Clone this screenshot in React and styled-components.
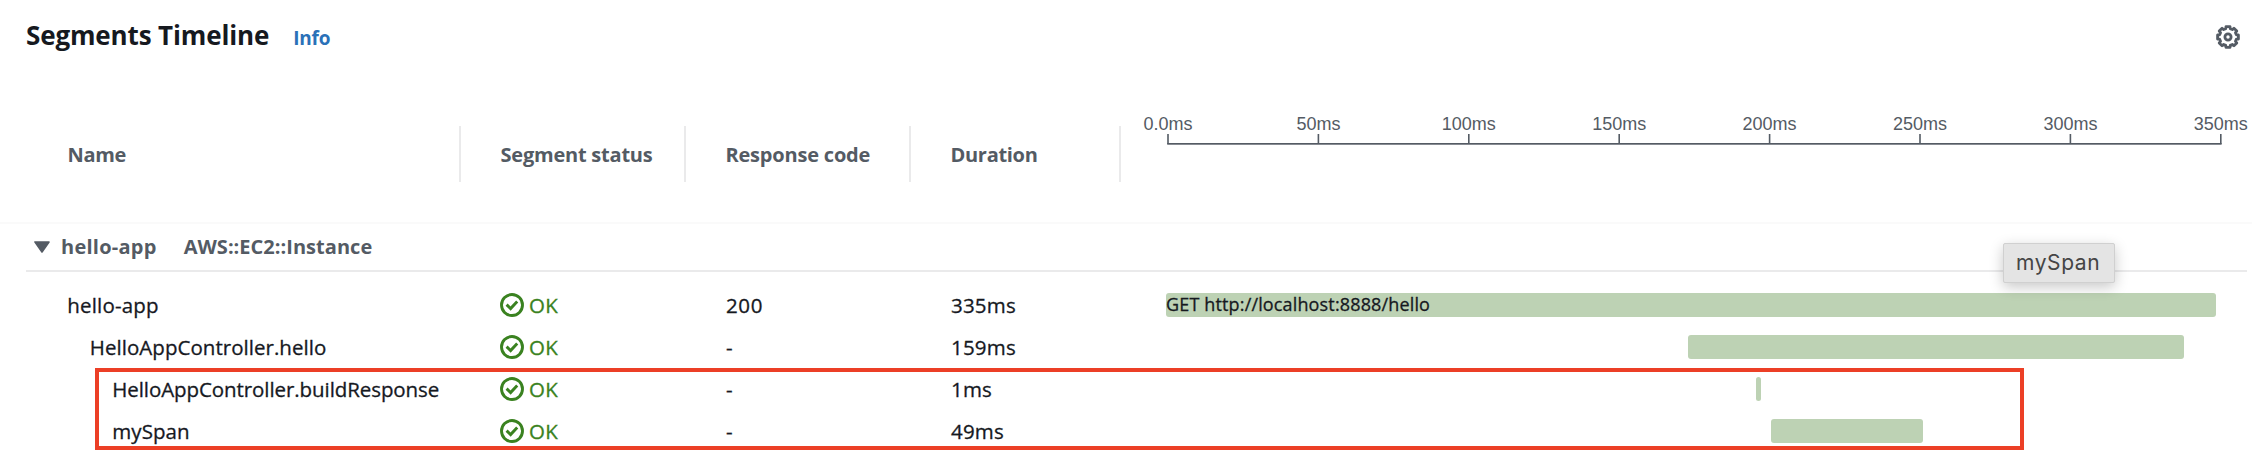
import React from 'react';
import styled, { createGlobalStyle } from 'styled-components';

const GlobalStyle = createGlobalStyle`
  *, *::before, *::after { box-sizing: border-box; }
  body {
    margin: 0;
    background: #ffffff;
    color: #16191f;
    font-family: "Open Sans", "Noto Sans", sans-serif;
    font-size: 20.5px;
    line-height: 28px;
  }
`;

const COLUMNS = '461px 225px 225px 210px 1fr';

const Panel = styled.main`
  position: relative;
  display: flex;
  flex-direction: column;
  width: 2252px;
  height: 476px;
  overflow: hidden;
  background: #ffffff;
`;

const TitleBar = styled.header`
  display: flex;
  align-items: center;
  justify-content: space-between;
  height: 74px;
  padding: 0 12px 0 26px;
`;

const TitleGroup = styled.div`
  display: flex;
  align-items: baseline;
  gap: 24px;
  padding-bottom: 5px;
`;

const Title = styled.h2`
  margin: 0;
  font-size: 26px;
  line-height: 36px;
  font-weight: 700;
  letter-spacing: -0.14px;
`;

const InfoLink = styled.a`
  color: #2a71b8;
  font-size: 19px;
  font-weight: 700;
  letter-spacing: -0.2px;
`;

const SettingsButton = styled.button`
  display: flex;
  padding: 0;
  border: 0;
  background: none;
`;

const TableHead = styled.div`
  display: grid;
  grid-template-columns: ${COLUMNS};
  height: 150px;
  border-bottom: 2px solid #fafafa;
`;

const HeadCell = styled.div`
  display: flex;
  align-items: center;
  height: 56px;
  margin-top: 52px;
  padding-top: 2px;
  padding-left: ${(p) => (p.$first ? 67.5 : 39.5)}px;
  border-right: 2px solid #eaeaeb;
  color: #545b64;
  font-size: 20px;
  font-weight: 700;
  letter-spacing: ${(p) => p.$tracking}px;
`;

const Axis = styled.svg`
  display: block;
  margin-top: 36px;
  color: #545b64;
  font-family: "Liberation Sans", Arial, sans-serif;
  font-size: 18px;
`;

const GroupRow = styled.div`
  display: flex;
  align-items: center;
  height: 48px;
  margin: 0 5px 0 26px;
  padding-left: 8px;
  border-bottom: 2px solid #eaeaeb;
  color: #545b64;
  font-size: 20px;
  font-weight: 700;
`;

const GroupName = styled.span`
  margin-left: 11px;
  letter-spacing: 0.25px;
`;

const GroupType = styled.span`
  margin-left: 27px;
  letter-spacing: 0.03px;
`;

const Rows = styled.div`
  display: flex;
  flex-direction: column;
  padding-top: 12px;
  -webkit-text-stroke: 0.3px currentColor;
`;

const Row = styled.div`
  display: grid;
  grid-template-columns: ${COLUMNS};
  align-items: center;
  height: 42px;
`;

const NameCell = styled.div`
  padding-left: ${(p) => 67.3 + p.$depth * 22.5}px;
  letter-spacing: ${(p) => p.$tracking}px;
`;

const Status = styled.div`
  display: flex;
  align-items: center;
  gap: 5px;
  padding-left: 39px;
  color: #3a8220;
  letter-spacing: 0.4px;
`;

const Cell = styled.div`
  padding-left: 40px;
  letter-spacing: ${(p) => p.$tracking || 0.2}px;
`;

const Track = styled.div`
  padding-left: 45px;
`;

const Bar = styled.div`
  height: 24px;
  margin-left: ${(p) => p.$start}px;
  width: ${(p) => p.$length}px;
  border-radius: 3px;
  background: #bdd2b4;
  font-size: 18px;
  line-height: 23px;
  letter-spacing: 0.15px;
  white-space: nowrap;
`;

const Highlight = styled.div`
  position: absolute;
  left: 95px;
  top: 368px;
  width: 1929px;
  height: 82px;
  border: 4px solid #ec3f26;
`;

const Tooltip = styled.div`
  position: absolute;
  left: 2003px;
  top: 243px;
  width: 112px;
  height: 40px;
  padding-left: 12px;
  border: 1px solid #d0d0d0;
  border-radius: 2px;
  background: #e4e4e4;
  box-shadow: 0 4px 14px rgba(0, 0, 0, 0.22);
  color: #454545;
  font-family: Inter, sans-serif;
  font-size: 21px;
  line-height: 38px;
  letter-spacing: 0.6px;
`;

const TICKS = ['0.0ms', '50ms', '100ms', '150ms', '200ms', '250ms', '300ms', '350ms'];

const SPANS = [
  { name: 'hello-app', depth: 0, tracking: 0.18, code: '200', duration: '335ms', start: 0, length: 1050, label: 'GET http://localhost:8888/hello' },
  { name: 'HelloAppController.hello', depth: 1, tracking: 0.04, code: '-', duration: '159ms', start: 522, length: 496 },
  { name: 'HelloAppController.buildResponse', depth: 2, tracking: -0.08, code: '-', duration: '1ms', start: 590, length: 5 },
  { name: 'mySpan', depth: 2, tracking: 0.06, code: '-', duration: '49ms', start: 605, length: 152 },
];

function gearOutline() {
  const points = [];
  for (let i = 0; i < 8; i += 1) {
    [[-11, 10.6], [11, 10.6], [15, 8.6], [30, 8.6]].forEach(([offset, radius]) => {
      const a = ((i * 45 + offset - 90) * Math.PI) / 180;
      points.push(`${(12 + radius * Math.cos(a)).toFixed(2)},${(12 + radius * Math.sin(a)).toFixed(2)}`);
    });
  }
  return points.join(' ');
}

function GearIcon() {
  return (
    <svg width="24" height="24" viewBox="0 0 24 24" fill="none" stroke="#545b64">
      <polygon points={gearOutline()} strokeWidth="2.8" strokeLinejoin="round" />
      <circle cx="12" cy="12" r="3.1" strokeWidth="2.8" />
    </svg>
  );
}

function CheckIcon() {
  return (
    <svg width="24" height="24" viewBox="0 0 24 24" fill="none" stroke="currentColor" strokeWidth="2.9">
      <circle cx="12" cy="12" r="10.5" />
      <path d="M6.6 11.6l4 4 6.6-7" />
    </svg>
  );
}

function TimeAxis() {
  const x = (i) => 47 + i * 150.4;
  return (
    <Axis width="1131" height="40" fill="currentColor">
      {TICKS.map((t, i) => (
        <g key={t}>
          <text x={x(i)} y="20.3" textAnchor="middle">{t}</text>
          <rect x={x(i) - 0.8} y="24" width="1.6" height="10" />
        </g>
      ))}
      <rect x="46.2" y="33" width="1054.4" height="1.7" />
    </Axis>
  );
}

export default function App() {
  return (
    <>
      <GlobalStyle />
      <Panel>
        <TitleBar>
          <TitleGroup>
            <Title>Segments Timeline</Title>
            <InfoLink>Info</InfoLink>
          </TitleGroup>
          <SettingsButton aria-label="Settings"><GearIcon /></SettingsButton>
        </TitleBar>
        <TableHead>
          <HeadCell $first $tracking={-0.35}>Name</HeadCell>
          <HeadCell $tracking={-0.22}>Segment status</HeadCell>
          <HeadCell $tracking={-0.2}>Response code</HeadCell>
          <HeadCell $tracking={-0.3}>Duration</HeadCell>
          <TimeAxis />
        </TableHead>
        <GroupRow>
          <svg width="16" height="12" viewBox="0 0 16 12">
            <path d="M1 1h14l-7 10z" fill="#545b64" stroke="#545b64" strokeWidth="1.6" strokeLinejoin="round" />
          </svg>
          <GroupName>hello-app</GroupName>
          <GroupType>AWS::EC2::Instance</GroupType>
        </GroupRow>
        <Rows>
          {SPANS.map((s) => (
            <Row key={s.name}>
              <NameCell $depth={s.depth} $tracking={s.tracking}>{s.name}</NameCell>
              <Status><CheckIcon />OK</Status>
              <Cell $tracking={0.6}>{s.code}</Cell>
              <Cell>{s.duration}</Cell>
              <Track><Bar $start={s.start} $length={s.length}>{s.label}</Bar></Track>
            </Row>
          ))}
        </Rows>
        <Highlight />
        <Tooltip role="tooltip">mySpan</Tooltip>
      </Panel>
    </>
  );
}
